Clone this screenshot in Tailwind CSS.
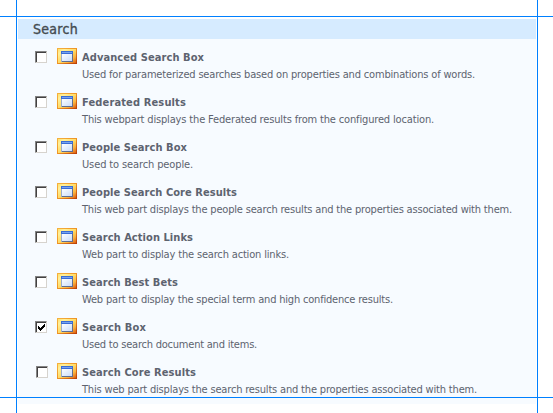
<!DOCTYPE html>
<html lang="en">
<head>
<meta charset="utf-8">
<title>Search web parts</title>
<script src="https://cdn.jsdelivr.net/npm/@tailwindcss/browser@4"></script>
</head>
<body class="relative h-[413px] w-[553px] overflow-hidden bg-white pl-[18px] pt-[19px] [font-family:'DejaVu_Sans_Condensed','DejaVu_Sans',sans-serif] [font-stretch:condensed] text-[#5d636f]">
<svg width="0" height="0" class="absolute">
<defs>
<linearGradient id="gold" x1="0" y1="0" x2="1" y2="1"><stop offset="0" stop-color="#ffe070"/><stop offset=".2" stop-color="#fff09a"/><stop offset=".5" stop-color="#ffdc68"/><stop offset=".75" stop-color="#fbb440"/><stop offset="1" stop-color="#dc5c10"/></linearGradient>
<linearGradient id="edge" x1="0" y1="0" x2="1" y2="1"><stop offset="0" stop-color="#f5b440"/><stop offset=".5" stop-color="#ef9424"/><stop offset="1" stop-color="#b83a04"/></linearGradient>
<linearGradient id="pane" x1="0" y1="0" x2="1" y2="1"><stop offset="0" stop-color="#fff"/><stop offset="1" stop-color="#c9dcfa"/></linearGradient>
<symbol id="part" viewBox="0 0 20 16"><path fill="url(#edge)" d="M0 0h20v16H0z"/><path fill="url(#gold)" d="M1 1h18v14H1z"/><path fill="#9aaccf" d="M4 3h12v11H4z"/><path fill="#5f6e92" d="M15 6h1v8H5v-1h10z"/><path fill="#3a6cd4" d="M4 3h12v3H4z"/><path fill="#76a2f0" d="M5 4h10v1H5z"/><path fill="url(#pane)" d="M5 6h10v7H5z"/></symbol>
</defs>
</svg>
<main class="h-[385px] w-[518px] bg-[#f7fbff]">
<h1 class="h-5 bg-[#d6ebff] pl-[15px] text-[14px] leading-[21px] text-[#444b50] [-webkit-text-stroke:0.35px_#444b50]"><span data-w="45">Search</span></h1>
<ul id="list" class="pt-[9px]"></ul>
</main>
<div class="absolute left-0 top-4 h-px w-full bg-[#0080ff]"></div>
<div class="absolute left-0 top-[397px] h-px w-full bg-[#0080ff]"></div>
<div class="absolute left-4 top-0 h-full w-px bg-[#0080ff]"></div>
<div class="absolute left-[537px] top-0 h-full w-px bg-[#0080ff]"></div>
<script>
const rows = [
["Advanced Search Box",122,"Used for parameterized searches based on properties and combinations of words.",393],
["Federated Results",104,"This webpart displays the Federated results from the configured location.",352],
["People Search Box",105,"Used to search people.",111],
["People Search Core Results",155,"This web part displays the people search results and the properties associated with them.",430],
["Search Action Links",111,"Web part to display the search action links.",207],
["Search Best Bets",96,"Web part to display the special term and high confidence results.",311],
["Search Box",64,"Used to search document and items.",175],
["Search Core Results",114,"This web part displays the search results and the properties associated with them.",395]];
document.getElementById("list").innerHTML = rows.map(([t,tw,d,dw],i)=>`<li class="flex h-[45px] whitespace-nowrap">
<span class="mt-[3px] size-3 shrink-0 border border-t-[#848484] border-l-[#848484] border-r-[#d6d3ce] border-b-[#d6d3ce] bg-white shadow-[inset_1px_1px_0_#424142] ${i==7?'ml-[18px] mr-[9px]':'ml-[17px] mr-[10px]'}">${i==6?'<svg width="10" height="10" viewBox="0 0 10 10" shape-rendering="crispEdges"><path d="M2 4h1v1h1v1h1v-1h1v-1h1v-1h1v-1h1v3h-1v1h-1v1h-1v1h-1v1h-1v-1h-1v-1h-1z"/></svg>':''}</span>
<svg width="20" height="16" class="mr-[5px] shrink-0" shape-rendering="crispEdges"><use href="#part"/></svg>
<div class="pt-px"><h2 class="h-[17px] text-[11px] leading-[17px] font-bold"><span data-w="${tw}">${t}</span></h2><p class="h-[17px] text-[11px] leading-[17px]"><span data-w="${dw}">${d}</span></p></div></li>`).join("");
function fit(){document.querySelectorAll("[data-w]").forEach(e=>{e.style.letterSpacing="0px";e.style.letterSpacing=((+e.dataset.w-e.getBoundingClientRect().width)/e.textContent.length)+"px"})}
fit();
addEventListener("load",fit);
document.fonts.ready.then(fit);
</script>
</body>
</html>
